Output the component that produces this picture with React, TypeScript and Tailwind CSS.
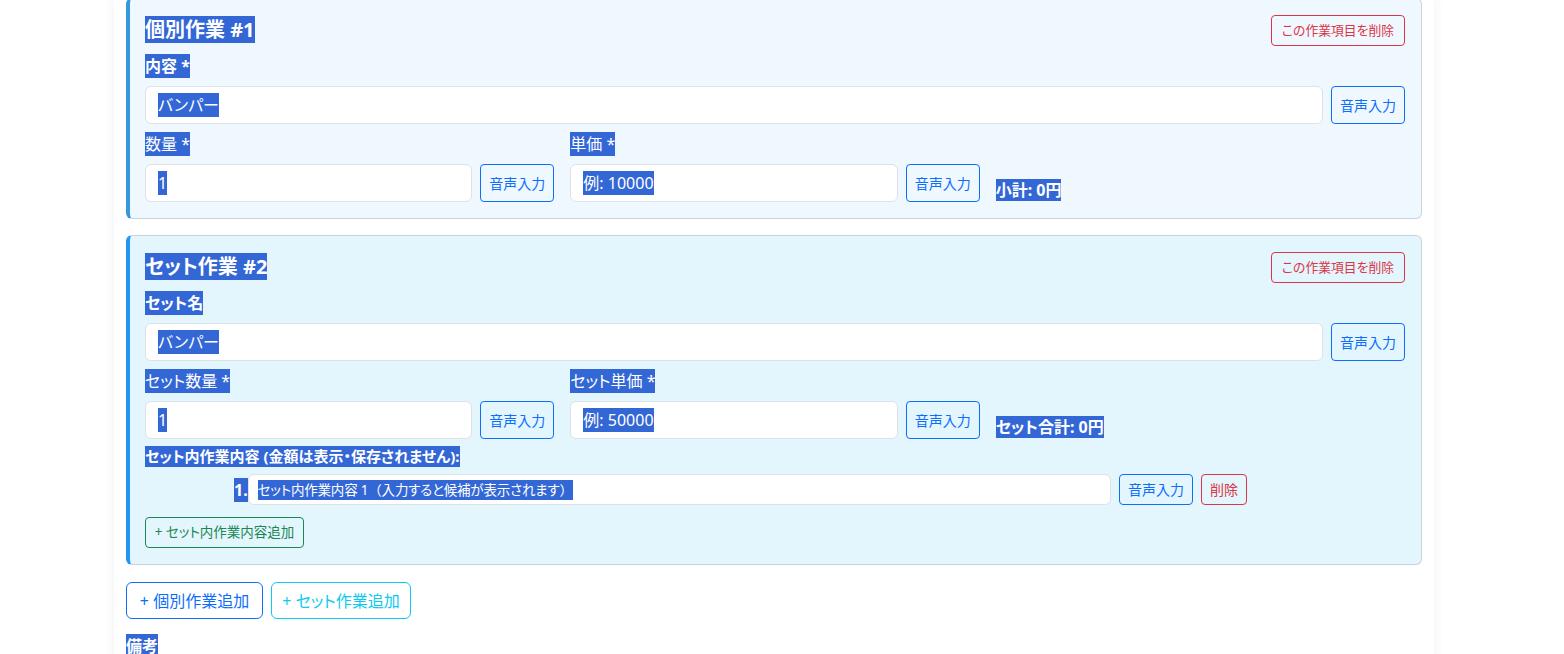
import React from 'react';

const FONT = { fontFamily: '"Noto Sans", "Noto Sans CJK JP", sans-serif' };

const Hl: React.FC<{ className?: string; children: React.ReactNode }> = ({ className = '', children }) => (
  <span className={`inline-block bg-[#3367d6] text-white whitespace-pre ${className}`}>{children}</span>
);

const OutlineBtn: React.FC<{ tone: 'blue' | 'red' | 'green' | 'cyan'; className?: string; children: React.ReactNode }> = ({
  tone,
  className = '',
  children,
}) => {
  const tones = {
    blue: 'border-[#0d6efd] text-[#0d6efd]',
    red: 'border-[#dc3545] text-[#dc3545]',
    green: 'border-[#198754] text-[#198754]',
    cyan: 'border-[#0dcaf0] text-[#0dcaf0]',
  };
  return (
    <button
      className={`shrink-0 border bg-transparent flex items-center justify-center whitespace-nowrap ${tones[tone]} ${className}`}
    >
      {children}
    </button>
  );
};

const FakeInput: React.FC<{ value: React.ReactNode; className?: string; textClass?: string }> = ({ value, className = '', textClass = '' }) => (
  <div className={`flex items-center bg-white border border-[#dee2e6] rounded-md min-w-0 ${className}`}>
    <Hl className={textClass}>{value}</Hl>
  </div>
);

const VoiceBtn: React.FC<{ className?: string }> = ({ className = 'h-[38px]' }) => (
  <OutlineBtn tone="blue" className={`w-[74px] rounded-[4px] text-[14px] ${className}`}>
    音声入力
  </OutlineBtn>
);

const Label: React.FC<{ className?: string; bold?: boolean; children: React.ReactNode }> = ({ className = 'mb-2', bold, children }) => (
  <div className={`flex ${className}`}>
    <Hl className={`text-[16px] leading-[24px] ${bold ? 'font-bold' : ''}`}>{children}</Hl>
  </div>
);

const Field: React.FC<{ label: string; value: string }> = ({ label, value }) => (
  <div>
    <Label>{label}</Label>
    <div className="flex gap-2">
      <FakeInput value={value} className="flex-1 h-[38px] pl-3" textClass="text-[16px] leading-[24px]" />
      <VoiceBtn />
    </div>
  </div>
);

const ItemHeader: React.FC<{ title: string }> = ({ title }) => (
  <div className="flex items-start justify-between mb-2">
    <Hl className="mt-px text-[20px] font-bold leading-[27px]">{title}</Hl>
    <OutlineBtn tone="red" className="w-[134px] h-[31px] rounded-[4px] text-[12.8px]">
      この作業項目を削除
    </OutlineBtn>
  </div>
);

export default function App() {
  return (
    <div className="min-h-screen bg-white [font-feature-settings:'palt']" style={FONT}>
      <div className="ml-[114px] w-[1320px] bg-white shadow-[0_0_12px_rgba(0,0,0,0.06)] px-3 -mt-[2px]">
        {/* 個別作業 */}
        <div className="mb-[16px] rounded-md border border-[#c9d3dd] border-l-4 border-l-[#3498db] bg-[#f0f8ff] pt-4 pb-4 pl-[15px] pr-4">
          <ItemHeader title="個別作業 #1" />
          <Label bold>内容 *</Label>
          <div className="flex gap-2 mb-2">
            <FakeInput value="バンパー" className="flex-1 h-[38px] pl-3" textClass="text-[16px] leading-[24px]" />
            <VoiceBtn />
          </div>
          <div className="grid grid-cols-3 gap-x-4">
            <Field label="数量 *" value="1" />
            <Field label="単価 *" value="例: 10000" />
            <div className="flex items-end pb-px">
              <Hl className="text-[16px] font-bold leading-[22px]">小計: 0円</Hl>
            </div>
          </div>
        </div>

        {/* セット作業 */}
        <div className="rounded-md border border-[#c9d3dd] border-l-4 border-l-[#2196f3] bg-[#e3f5fd] pt-4 pb-4 pl-[15px] pr-4">
          <ItemHeader title="セット作業 #2" />
          <Label bold>セット名</Label>
          <div className="flex gap-2 mb-2">
            <FakeInput value="バンパー" className="flex-1 h-[38px] pl-3" textClass="text-[16px] leading-[24px]" />
            <VoiceBtn />
          </div>
          <div className="grid grid-cols-3 gap-x-4 mb-[7px]">
            <Field label="セット数量 *" value="1" />
            <Field label="セット単価 *" value="例: 50000" />
            <div className="flex items-end pb-px">
              <Hl className="text-[16px] font-bold leading-[22px]">セット合計: 0円</Hl>
            </div>
          </div>
          <div className="flex mb-[7px]">
            <Hl className="text-[15px] font-bold leading-[21px]">セット内作業内容 (金額は表示・保存されません):</Hl>
          </div>
          <div className="flex items-center pl-[89px] pr-[158px] mb-3">
            <Hl className="text-[16px] font-bold leading-[24px]">1.</Hl>
            <FakeInput
              value={
                <>
                  セット内作業内容 1<span className="[font-feature-settings:normal]">（</span>入力すると候補が表示されます
                  <span className="[font-feature-settings:normal]">）</span>
                </>
              }
              className="flex-1 h-[31px] pl-[9px] mr-2 rounded-[4px]"
              textClass="text-[13.5px] leading-[20px] tracking-[-0.2px]"
            />
            <VoiceBtn className="h-[31px]" />
            <OutlineBtn tone="red" className="ml-2 w-[46px] h-[31px] rounded-[4px] text-[14px]">
              削除
            </OutlineBtn>
          </div>
          <OutlineBtn tone="green" className="w-[159px] h-[31px] rounded-[4px] text-[13.5px]">
            + セット内作業内容追加
          </OutlineBtn>
        </div>

        <div className="flex gap-2 mt-[17px] mb-[15px]">
          <OutlineBtn tone="blue" className="w-[137px] h-[37px] rounded-md text-[16px]">
            + 個別作業追加
          </OutlineBtn>
          <OutlineBtn tone="cyan" className="w-[140px] h-[37px] rounded-md text-[16px]">
            + セット作業追加
          </OutlineBtn>
        </div>
        <Label bold className="">備考</Label>
        <div className="h-10" />
      </div>
    </div>
  );
}
